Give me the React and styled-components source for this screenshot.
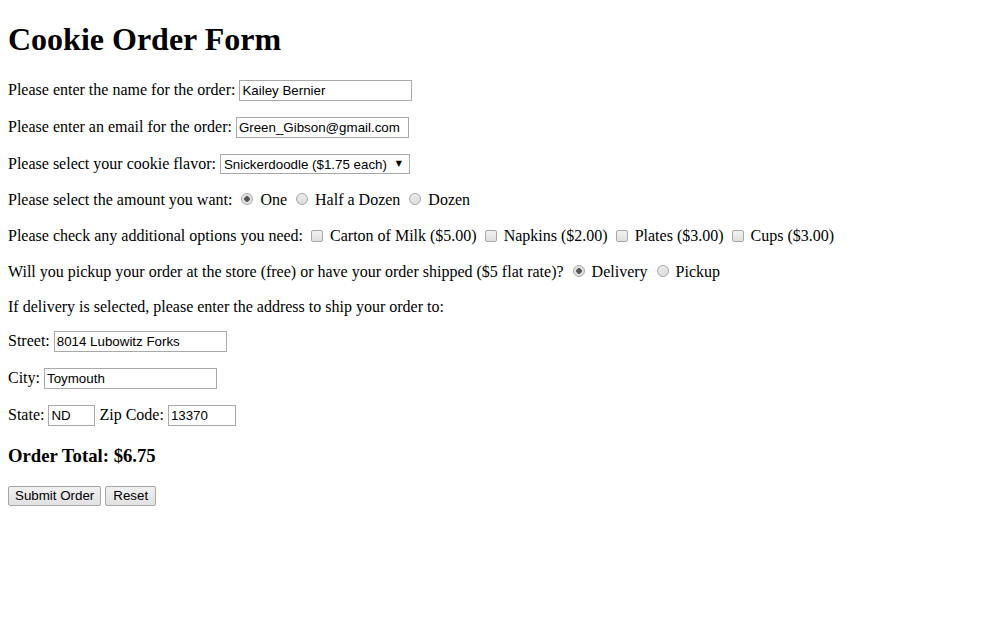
import React, { useState } from "react";
import styled, { createGlobalStyle } from "styled-components";

const GlobalStyle = createGlobalStyle`
  body {
    margin: 0;
    background: #ffffff;
    color: #000000;
    font-family: "Liberation Serif", "Times New Roman", serif;
    font-size: 16px;
  }
`;

const Page = styled.div`
  padding: 0 8px 8px;
`;

const Title = styled.h1`
  font-size: 32px;
  font-weight: bold;
  margin: 21.44px 0;
`;

const Row = styled.p`
  margin: 16px 0;
  line-height: ${(p) => p.$lh || 19}px;
`;

const TextInput = styled.input`
  font-family: "Liberation Sans", Arial, sans-serif;
  font-size: 13.33px;
  color: #000;
  border: 1px solid #a9a9a9;
  padding: 1px 2px;
  width: ${(p) => p.$w || 167}px;
  height: 17px;
  margin: 0;
  outline: none;
  vertical-align: baseline;
`;

const SelectWrap = styled.span`
  position: relative;
  display: inline-block;
  vertical-align: baseline;
`;

const Select = styled.select`
  appearance: none;
  font-family: "Liberation Sans", Arial, sans-serif;
  font-size: 13.33px;
  color: #000;
  background: #ffffff;
  border: 1px solid #a9a9a9;
  border-radius: 0;
  padding: 1px 4px 1px 3px;
  width: 190px;
  height: 20px;
  margin: 0;
  outline: none;
`;

const Arrow = styled.span`
  position: absolute;
  right: 8px;
  top: 5px;
  line-height: normal;
  font-family: "DejaVu Sans", sans-serif;
  font-size: 8px;
  color: #000;
  pointer-events: none;
`;

const Radio = styled.input.attrs({ type: "radio" })`
  appearance: none;
  width: 12px;
  height: 12px;
  margin: 3px 3px 0 5px;
  border: 1px solid #a8a8a8;
  border-radius: 50%;
  background: linear-gradient(#ececec, #dcdcdc);
  box-sizing: border-box;
  vertical-align: baseline;

  &:checked {
    background: radial-gradient(circle, #555555 0 2.5px, #dcdcdc 3px, #ececec 100%);
  }
`;

const Check = styled.input.attrs({ type: "checkbox" })`
  appearance: none;
  width: 12px;
  height: 12px;
  margin: 3px 3px 0 4px;
  border: 1px solid #a8a8a8;
  border-radius: 2px;
  background: linear-gradient(#f2f2f2, #dedede);
  box-sizing: border-box;
  vertical-align: -1px;
`;

const Total = styled.h3`
  font-size: 18.72px;
  line-height: 22px;
  font-weight: bold;
  margin: 19px 0 18px;
`;

const Button = styled.button`
  font-family: "Liberation Sans", Arial, sans-serif;
  font-size: 13.33px;
  color: #000;
  background: linear-gradient(#f0f0f0, #e1e1e1);
  border: 1px solid #a6a6a6;
  border-radius: 2px;
  padding: 1px ${(p) => p.$pad || 6}px;
  height: 20px;
  margin: 0 4px 0 0;
`;

const App = () => {
  const [amount, setAmount] = useState("one");
  const [ship, setShip] = useState("delivery");

  return (
    <Page>
      <GlobalStyle />
      <Title>Cookie Order Form</Title>
      <form onSubmit={(e) => e.preventDefault()}>
        <Row>
          Please enter the name for the order:{" "}
          <TextInput defaultValue="Kailey Bernier" />
        </Row>
        <Row>
          Please enter an email for the order:{" "}
          <TextInput defaultValue="Green_Gibson@gmail.com" />
        </Row>
        <Row>
          Please select your cookie flavor:{" "}
          <SelectWrap>
            <Select defaultValue="snicker">
              <option value="snicker">Snickerdoodle ($1.75 each)</option>
              <option value="choc">Chocolate Chip ($1.50 each)</option>
            </Select>
            <Arrow>▼</Arrow>
          </SelectWrap>
        </Row>
        <Row $lh={20}>
          Please select the amount you want:{" "}
          <Radio name="amount" checked={amount === "one"} onChange={() => setAmount("one")} /> One{" "}
          <Radio name="amount" checked={amount === "half"} onChange={() => setAmount("half")} /> Half a Dozen{" "}
          <Radio name="amount" checked={amount === "dozen"} onChange={() => setAmount("dozen")} /> Dozen
        </Row>
        <Row $lh={20}>
          Please check any additional options you need: <Check /> Carton of Milk ($5.00) <Check />{" "}
          Napkins ($2.00) <Check /> Plates ($3.00) <Check /> Cups ($3.00)
        </Row>
        <Row $lh={20}>
          Will you pickup your order at the store (free) or have your order shipped ($5 flat rate)?{" "}
          <Radio name="ship" checked={ship === "delivery"} onChange={() => setShip("delivery")} /> Delivery{" "}
          <Radio name="ship" checked={ship === "pickup"} onChange={() => setShip("pickup")} /> Pickup
        </Row>
        <Row $lh={17}>If delivery is selected, please enter the address to ship your order to:</Row>
        <Row>
          Street: <TextInput defaultValue="8014 Lubowitz Forks" />
        </Row>
        <Row>
          City: <TextInput defaultValue="Toymouth" />
        </Row>
        <Row>
          State: <TextInput $w={41} defaultValue="ND" /> Zip Code:{" "}
          <TextInput $w={62} defaultValue="13370" />
        </Row>
        <Total>Order Total: $6.75</Total>
        <Row>
          <Button type="submit">Submit Order</Button>
          <Button type="reset" $pad={7}>Reset</Button>
        </Row>
      </form>
    </Page>
  );
};

export default App;
